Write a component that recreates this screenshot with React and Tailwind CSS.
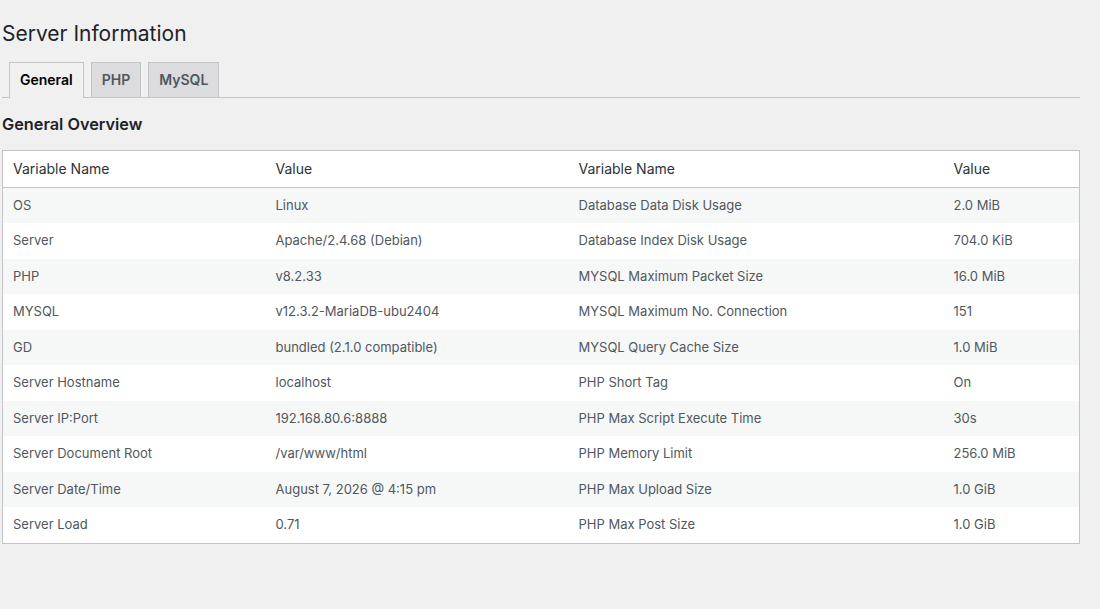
const rows = [
  ['OS', 'Linux', 'Database Data Disk Usage', '2.0 MiB'],
  ['Server', 'Apache/2.4.68 (Debian)', 'Database Index Disk Usage', '704.0 KiB'],
  ['PHP', 'v8.2.33', 'MYSQL Maximum Packet Size', '16.0 MiB'],
  ['MYSQL', 'v12.3.2-MariaDB-ubu2404', 'MYSQL Maximum No. Connection', '151'],
  ['GD', 'bundled (2.1.0 compatible)', 'MYSQL Query Cache Size', '1.0 MiB'],
  ['Server Hostname', 'localhost', 'PHP Short Tag', 'On'],
  ['Server IP:Port', '192.168.80.6:8888', 'PHP Max Script Execute Time', '30s'],
  ['Server Document Root', '/var/www/html', 'PHP Memory Limit', '256.0 MiB'],
  ['Server Date/Time', 'August 7, 2026 @ 4:15 pm', 'PHP Max Upload Size', '1.0 GiB'],
  ['Server Load', '0.71', 'PHP Max Post Size', '1.0 GiB'],
];

const tabs = ['General', 'PHP', 'MySQL'];

export default function App() {
  return (
    <div
      className="min-h-[609px] bg-[#f0f0f1] text-[13px] text-[#3c434a]"
      style={{ fontFamily: 'Inter, "Liberation Sans", sans-serif' }}
    >
      <div className="ml-[2px] mr-[20px] pt-[10px]">
        <h1 className="pt-[9px] pb-[4px] text-[21px] font-normal leading-[30px] text-[#1d2327]">
          Server Information
        </h1>

        {/* tabs */}
        <div className="flex border-b border-[#c3c4c7] pt-[9px]">
          {tabs.map((t, i) => (
            <div
              key={t}
              className={`ml-[7px] border border-b-0 border-[#c3c4c7] px-[10px] py-[5px] text-[14px] font-semibold leading-[24px] ${
                i === 0
                  ? 'relative -mb-px border-b border-b-[#f0f0f1] bg-[#f0f0f1] text-black'
                  : 'bg-[#dcdcde] text-[#50575e]'
              }`}
            >
              {t}
            </div>
          ))}
        </div>

        <h2 className="mt-[15px] mb-[15px] text-[16.3px] font-semibold leading-[22px] text-[#1d2327]">
          General Overview
        </h2>

        <table className="w-full border-collapse border border-[#c3c4c7] bg-white">
          <thead>
            <tr className="border-b border-[#c3c4c7]">
              <th className="w-[263px] px-[10px] py-[8px] text-left text-[14px] font-normal leading-[19.6px] text-[#2c3338]">Variable Name</th>
              <th className="w-[303px] px-[10px] py-[8px] text-left text-[14px] font-normal leading-[19.6px] text-[#2c3338]">Value</th>
              <th className="w-[375px] px-[10px] py-[8px] text-left text-[14px] font-normal leading-[19.6px] text-[#2c3338]">Variable Name</th>
              <th className="px-[10px] py-[8px] text-left text-[14px] font-normal leading-[19.6px] text-[#2c3338]">Value</th>
            </tr>
          </thead>
          <tbody>
            {rows.map((r, i) => (
              <tr key={i} className={i % 2 === 0 ? 'bg-[#f6f7f7]' : 'bg-white'}>
                {r.map((c, j) => (
                  <td key={j} className="px-[10px] py-[8px] leading-[19.5px] text-[#50575e]">
                    {c}
                  </td>
                ))}
              </tr>
            ))}
          </tbody>
        </table>
      </div>
    </div>
  );
}
